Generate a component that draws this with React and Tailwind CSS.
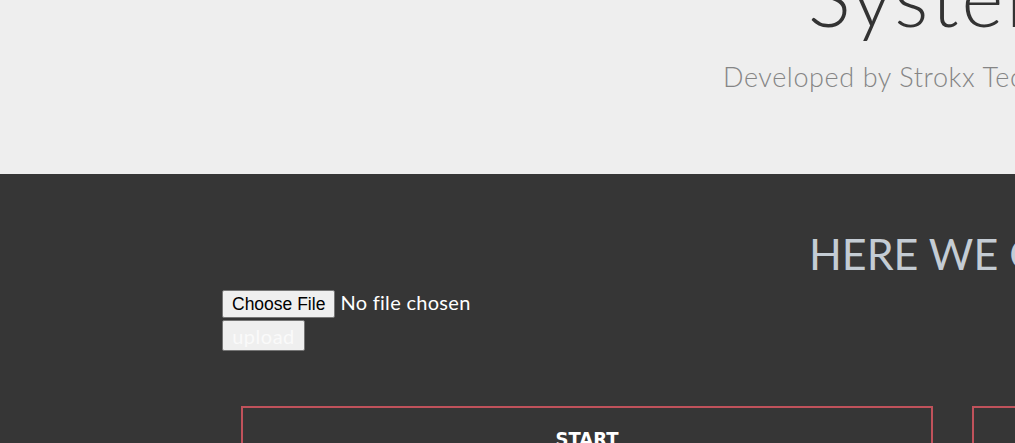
import React from 'react';

export default function App() {
    return (
        <div className="w-[1015px] h-[443px] overflow-hidden bg-[#363636] font-['Lato','Noto_Sans',sans-serif]">
            <header className="h-[174px] bg-[#eeeeee] overflow-hidden whitespace-nowrap">
                <h1 className="pl-[808px] mt-[-52px] text-[80px] leading-[96px] font-light text-[#333333] tracking-[3px]">
                    System
                </h1>
                <p className="pl-[723px] mt-[16px] text-[27px] leading-[34px] font-light text-[#858585] tracking-[0.6px]">
                    Developed by Strokx Technologies
                </p>
            </header>

            <section className="whitespace-nowrap">
                <h2 className="pl-[809px] pt-[54px] text-[43px] leading-[52px] text-[#c4ccd4]">
                    HERE WE GO
                </h2>
                <form className="pl-[222px] mt-[9px] flex flex-col items-start gap-[2px]">
                    <input
                        type="file"
                        className="text-[20px] leading-[26px] text-white tracking-[0.3px] file:mr-[5px] file:h-[28px] file:px-[9px] file:bg-[#efefef] file:text-black file:border file:border-[#767676] file:rounded-[2px] file:font-['Liberation_Sans',sans-serif] file:text-[17.5px] file:tracking-normal"
                    />
                    <button
                        type="button"
                        className="w-[83px] h-[31px] bg-[#efefef] border border-[#767676] rounded-[2px] text-[20px] leading-[24px] text-[#fafafa] tracking-[0.5px]"
                    >
                        upload
                    </button>
                </form>

                <div className="pl-[241px] pt-[55px] flex gap-[39px]">
                    <div className="w-[692px] shrink-0 h-[120px] border-2 border-[#c0525b] pt-[16px] text-center">
                        <span className="text-[20px] font-bold text-white font-['DejaVu_Sans_Condensed','DejaVu_Sans',sans-serif]">
                            START
                        </span>
                    </div>
                    <div className="w-[692px] shrink-0 h-[120px] border-2 border-[#c0525b]"></div>
                </div>
            </section>
        </div>
    );
}
